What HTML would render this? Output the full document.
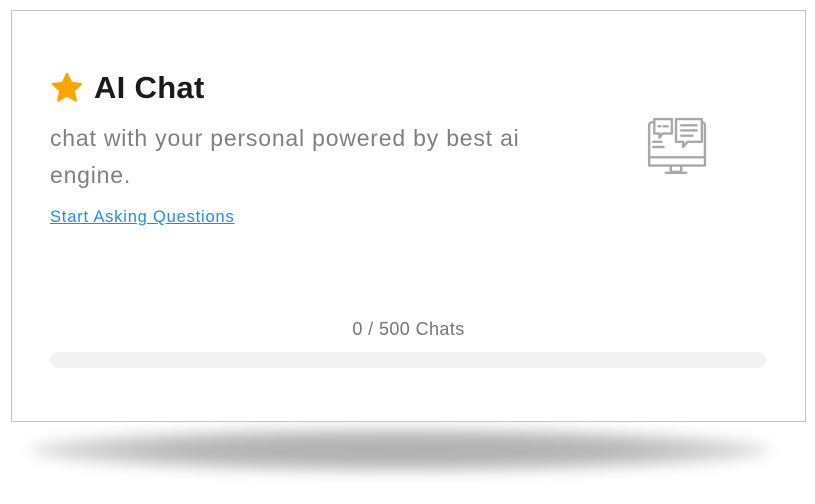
<!DOCTYPE html>
<html><head><style>
html,body{margin:0;padding:0;background:#fff;width:815px;height:504px;overflow:hidden;font-family:"Liberation Sans",sans-serif;}
.shadow{position:absolute;left:30px;top:428px;width:740px;height:44px;border-radius:50%;background:radial-gradient(ellipse at center,rgba(0,0,0,0.32) 0%,rgba(0,0,0,0.28) 45%,rgba(0,0,0,0.06) 80%,rgba(0,0,0,0) 100%);filter:blur(7px);}
.card{position:absolute;left:11px;top:10px;width:793px;height:410px;border:1px solid #c4c4c4;background:#fff;}
.title{position:absolute;left:38px;top:59px;display:flex;align-items:center;font-size:31px;font-weight:bold;color:#1a1a1a;letter-spacing:0.3px;}
.title svg{margin-right:10px}
.desc{position:absolute;left:38px;top:109px;width:540px;font-size:23px;line-height:37px;color:#808080;letter-spacing:0.8px;}
.link{position:absolute;left:38px;top:197px;font-size:16.5px;color:#1a8cff;text-decoration:underline;letter-spacing:0.8px;}
.count{position:absolute;left:0;width:793px;top:308px;text-align:center;font-size:18px;color:#777;letter-spacing:0.4px;}
.bar{position:absolute;left:38px;top:341px;width:716px;height:16px;border-radius:8px;background:#f3f3f3;}
.icon{position:absolute;left:633px;top:105px;}
</style></head><body>
<div class="shadow"></div>
<div class="card">
<div class="title"><svg width="34" height="32" viewBox="0 0 24 23"><path d="M12 1.2l3.1 6.6 7.1.8-5.3 4.9 1.5 7.1L12 17l-6.4 3.6 1.5-7.1-5.3-4.9 7.1-.8z" fill="#ffa500" stroke="#ffa500" stroke-width="1.5" stroke-linejoin="round"/></svg>AI Chat</div>
<div class="desc">chat with your personal powered by best ai engine.</div>
<div class="link">Start Asking Questions</div>
<div class="icon"><svg width="62" height="62" viewBox="0 0 60 60" fill="none" stroke="#a8a8a8" stroke-width="2.3" stroke-linejoin="round" stroke-linecap="round">
<path d="M4 48V9a3 3 0 0 1 3-3h2M55 6a3 3 0 0 1 3 3v39H4"/>
<path d="M4 40h54"/>
<path d="M25 48v6h10v-6M20 55h20"/>
<path d="M9 3h17v14H17l-3 4v-4H9z"/>
<path d="M30 3h25v22H41l-4 5v-5h-7z"/>
<path d="M13 10h2M18 10h4M35 9h15M35 14h15M35 19h11M8 25h8M8 30h10"/>
</svg></div>
<div class="count">0 / 500 Chats</div>
<div class="bar"></div>
</div>
</body></html>
